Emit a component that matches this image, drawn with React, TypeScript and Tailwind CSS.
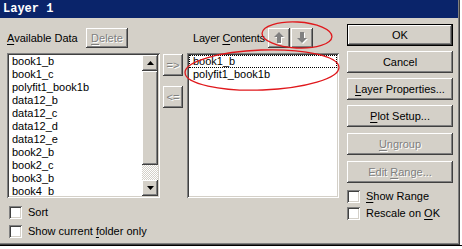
import React from 'react';

const raised =
  'shadow-[inset_-1px_-1px_#404040,inset_1px_1px_#ffffff,inset_-2px_-2px_#808080,inset_2px_2px_#d4d0c8]';
const sunken =
  'shadow-[inset_1px_1px_#808080,inset_-1px_-1px_#ffffff,inset_2px_2px_#404040,inset_-2px_-2px_#d4d0c8]';
const greyed = 'text-[#808080] [text-shadow:1px_1px_0_#ffffff]';

const U: React.FC<{ children: React.ReactNode }> = ({ children }) => (
  <span className="underline underline-offset-[2px] decoration-1">{children}</span>
);

const Btn: React.FC<{ children: React.ReactNode; disabled?: boolean; className?: string }> = ({
  children,
  disabled,
  className = '',
}) => (
  <div
    className={`flex items-center justify-center bg-[#d4d0c8] whitespace-nowrap ${raised} ${
      disabled ? greyed : 'text-black'
    } ${className}`}
  >
    <span className="flex items-center">{children}</span>
  </div>
);

const Check: React.FC<{ children: React.ReactNode; className?: string }> = ({ children, className = '' }) => (
  <div className={`flex items-center h-[13px] ${className}`}>
    <div className={`w-[13px] h-[13px] bg-white ${sunken}`} />
    <span className="ml-[6px] whitespace-nowrap">{children}</span>
  </div>
);

const Tri: React.FC<{ down?: boolean }> = ({ down }) => (
  <svg width="7" height="4" viewBox="0 0 7 4">
    <polygon points={down ? '0,0 7,0 3.5,4' : '3.5,0 7,4 0,4'} fill="#000" />
  </svg>
);

const MoveArrow: React.FC<{ down?: boolean }> = ({ down }) => {
  const pts = down ? '4,1 8,1 8,7 11,7 6,12 1,7 4,7' : '6,1 11,6 8,6 8,12 4,12 4,6 1,6';
  return (
    <svg width="13" height="14" viewBox="0 0 13 14">
      <polygon points={pts} fill="#ffffff" transform="translate(1 1)" />
      <polygon points={pts} fill="#808080" />
    </svg>
  );
};

const available = [
  'book1_b',
  'book1_c',
  'polyfit1_book1b',
  'data12_b',
  'data12_c',
  'data12_d',
  'data12_e',
  'book2_b',
  'book2_c',
  'book3_b',
  'book4_b',
];

export default function App() {
  return (
    <div className="relative w-[462px] h-[249px] overflow-hidden bg-white font-['Liberation_Sans',Arial,sans-serif] text-[11px] leading-[13px] text-black">
      <div className="w-[460px] h-[245px] bg-[#d4d0c8] shadow-[inset_-1px_-1px_#404040,inset_-2px_-2px_#808080] flex flex-col">
        {/* title bar */}
        <div className="h-[18px] mr-[2px] bg-[#0a246a] flex items-center pl-[3px] text-white font-bold font-['Liberation_Mono',monospace] text-[12px]">
          Layer 1
        </div>

        <div className="flex pl-[7px] pt-[6px]">
          {/* available data */}
          <div className="w-[153px] pt-[4px] flex flex-col">
            <div className="flex items-center h-[20px]">
              <span className="w-[79px] whitespace-nowrap">
                <U>A</U>vailable Data
              </span>
              <Btn disabled className="w-[42px] h-[20px]">
                <U>D</U>elete
              </Btn>
            </div>
            <div className={`mt-[5px] h-[145px] p-[2px] bg-white flex ${sunken}`}>
              <div className="flex-1 pl-[2px] overflow-hidden">
                {available.map((n) => (
                  <div key={n} className="h-[13px] pl-[1px] whitespace-nowrap">
                    {n}
                  </div>
                ))}
              </div>
              <div className="w-[16px] flex flex-col">
                <div className={`h-[16px] flex items-center justify-center bg-[#d4d0c8] ${raised}`}>
                  <Tri />
                </div>
                <div className={`h-[94px] bg-[#d4d0c8] ${raised}`} />
                <div className="flex-1 bg-[repeating-conic-gradient(#ffffff_0_25%,#d4d0c8_0_50%)] bg-[length:2px_2px]" />
                <div className={`h-[16px] flex items-center justify-center bg-[#d4d0c8] ${raised}`}>
                  <Tri down />
                </div>
              </div>
            </div>
            <Check className="mt-[8px] ml-[2px]">Sort</Check>
            <Check className="mt-[6px] ml-[2px]">
              Show current <U>f</U>older only
            </Check>
          </div>

          {/* add / remove */}
          <div className="ml-[3px] w-[20px] pt-[30px] flex flex-col">
            <Btn disabled className="h-[22px]">
              =&gt;
            </Btn>
            <Btn disabled className="h-[22px] mt-[10px]">
              &lt;=
            </Btn>
          </div>

          {/* layer contents */}
          <div className="ml-[4px] w-[152px] pt-[4px] flex flex-col">
            <div className="flex items-center h-[20px] pl-[6px]">
              <span className="w-[75px] whitespace-nowrap tracking-[-0.2px]">
                Layer <U>C</U>ontents
              </span>
              <Btn className="w-[22px] h-[20px]">
                <MoveArrow />
              </Btn>
              <Btn className="w-[22px] h-[20px] ml-[1px]">
                <MoveArrow down />
              </Btn>
            </div>
            <div className={`mt-[5px] h-[145px] p-[2px] bg-white ${sunken}`}>
              <div className="h-[13px] pl-[3px] border border-dotted border-black whitespace-nowrap leading-[11px]">
                book1_b
              </div>
              <div className="h-[13px] pl-[4px] whitespace-nowrap">polyfit1_book1b</div>
            </div>
          </div>

          {/* command buttons */}
          <div className="ml-[8px] w-[106px] flex flex-col">
            <div className="h-[22px] border border-black">
              <Btn className="h-full">OK</Btn>
            </div>
            <Btn className="h-[22px] mt-[5px]">Cancel</Btn>
            <Btn className="h-[22px] mt-[5px]">
              <span>
                <U>L</U>ayer Properties...
              </span>
            </Btn>
            <Btn className="h-[22px] mt-[5px]">
              <span>
                <U>P</U>lot Setup...
              </span>
            </Btn>
            <Btn disabled className="h-[22px] mt-[6px]">
              <span>
                <U>U</U>ngroup
              </span>
            </Btn>
            <Btn disabled className="h-[22px] mt-[6px]">
              <span>
                Edit <U>R</U>ange...
              </span>
            </Btn>
            <Check className="mt-[7px]">
              <U>S</U>how Range
            </Check>
            <Check className="mt-[4px]">
              Rescale on <U>O</U>K
            </Check>
          </div>
        </div>
      </div>

      {/* window underneath */}
      <div className="h-[1px] bg-black" />

      {/* red annotation marks */}
      <svg className="absolute inset-0 pointer-events-none" width="462" height="249" viewBox="0 0 462 249">
        <ellipse cx="297" cy="35" rx="35" ry="13" fill="none" stroke="#e0181c" strokeWidth="1.3" transform="rotate(3 297 35)" />
        <ellipse cx="262" cy="70" rx="77" ry="20" fill="none" stroke="#e0181c" strokeWidth="1.3" transform="rotate(-2 262 70)" />
      </svg>
    </div>
  );
}
